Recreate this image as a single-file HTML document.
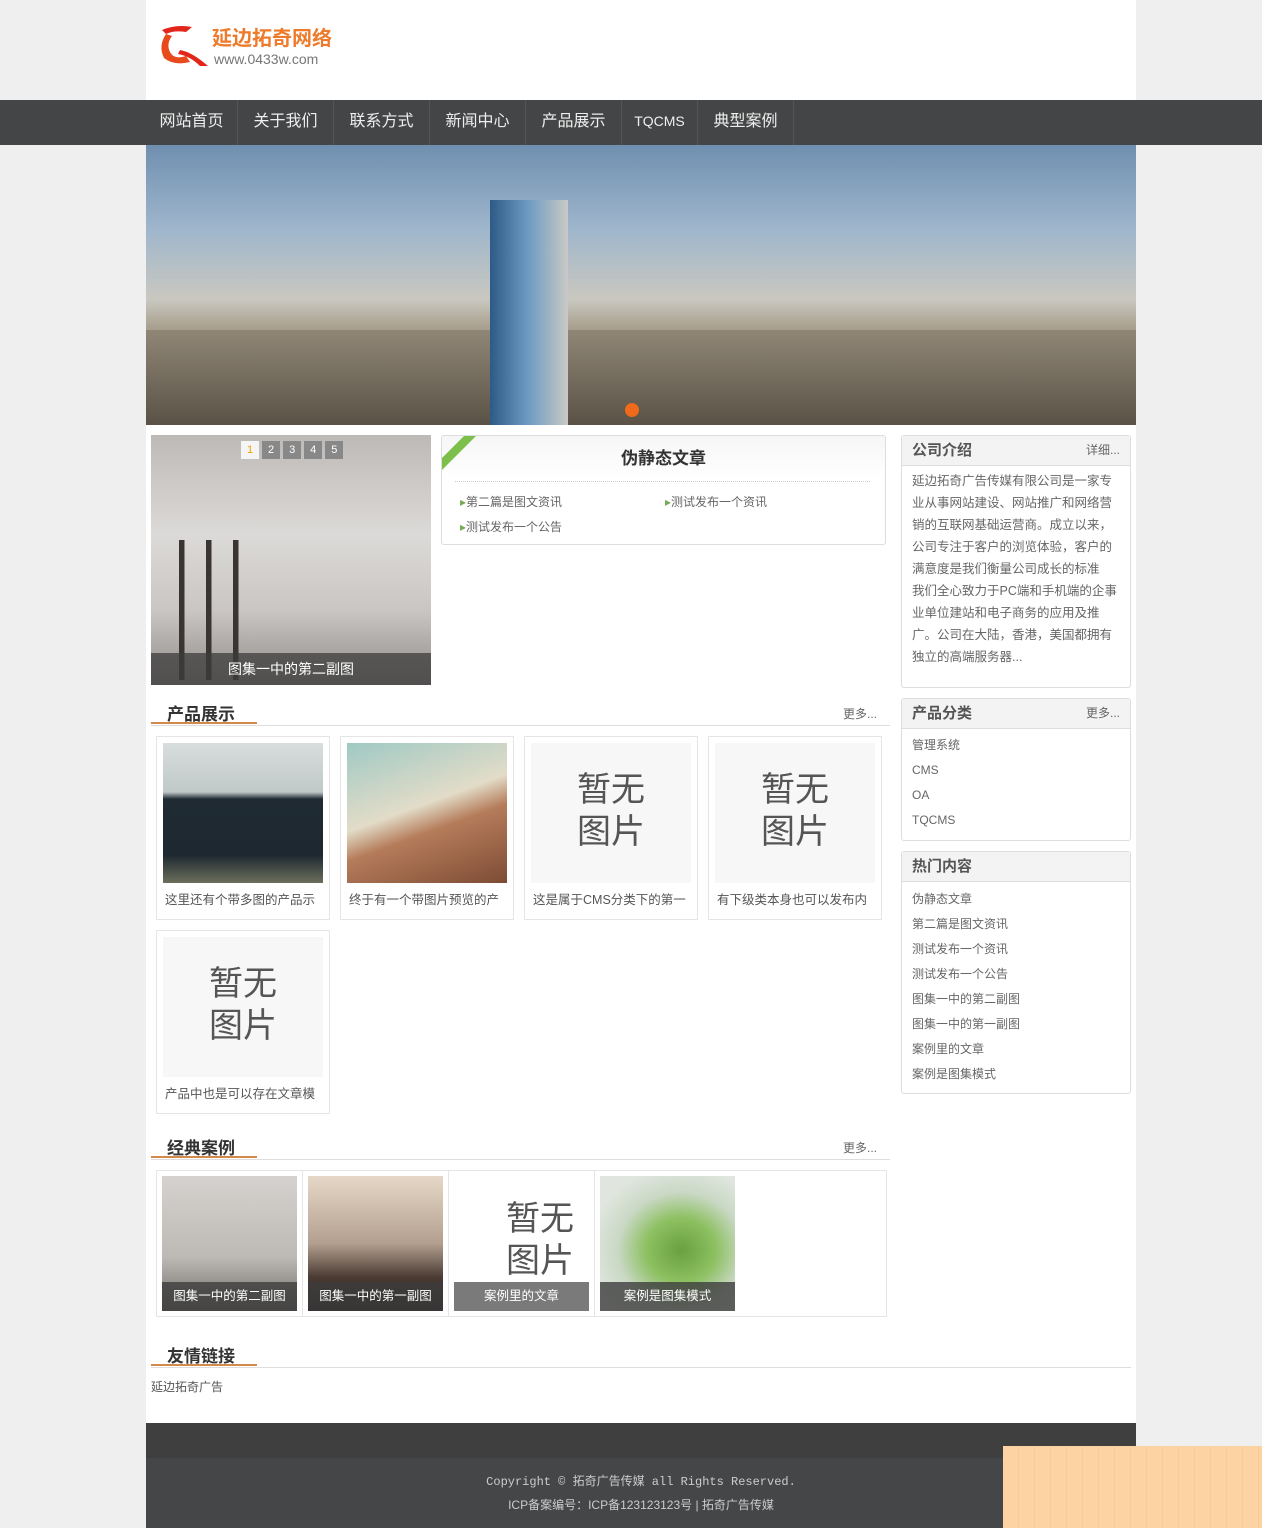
<!DOCTYPE html>
<html><head><meta charset="utf-8"><style>
*{margin:0;padding:0;box-sizing:border-box}
body{width:1262px;height:1528px;background:#efefef;font-family:"Liberation Sans","Noto Sans CJK SC",sans-serif;font-size:12px;color:#555;position:relative;overflow:hidden}
.a{position:absolute}
#wrap{left:146px;top:0;width:990px;height:1528px;background:#fff}
#nav{left:0;top:100px;width:1262px;height:45px;background:#444546}
#nav span{position:absolute;top:0;height:45px;line-height:43px;color:#eee;font-size:16px;text-align:center;border-right:1px solid #555}
.box{border:1px solid #ddd;border-radius:3px;background:#fff}
.bh{height:30px;background:#f3f3f3;border-bottom:1px solid #ddd;line-height:29px;padding:0 10px;font-size:15px;font-weight:bold;color:#555}
.bh i{float:right;font-style:normal;font-weight:normal;font-size:12px;color:#666}
.list div{height:25px;line-height:25px;font-size:12px;color:#666}
.tt{font-size:17px;font-weight:bold;color:#333}
.card{border:1px solid #e5e5e5;width:174px;height:184px}
.card .im{position:absolute;left:6px;top:6px;width:160px;height:140px;background:#f7f7f7;color:#555;font-size:34px;line-height:42px;text-align:center;padding-top:26px}
.card .t{position:absolute;left:8px;top:152px;font-size:12.5px;color:#555;white-space:nowrap;width:158px;overflow:hidden}
.cs{width:135px;height:135px}
.cs .cap{position:absolute;left:0;bottom:0;width:135px;height:29px;background:rgba(60,60,60,.8);color:#fff;text-align:center;line-height:29px;font-size:12.5px}
</style></head><body>
<div id="wrap" class="a"></div>
<svg class="a" style="left:156px;top:22px" width="56" height="46" viewBox="0 0 56 46"><path d="M6 8 Q20 2 36 5 L30 10 Q18 8 10 12 Z" fill="#e2261b"/><path d="M10 12 Q2 24 8 36 Q18 44 34 40 L30 34 Q18 38 14 30 Q10 22 16 14 Z" fill="#e84a1c"/><path d="M24 28 Q36 30 52 44 L44 44 Q34 34 22 32 Z" fill="#e2261b"/></svg>
<div class="a" style="left:212px;top:22px;font-size:20px;font-weight:bold;color:#ee7b2c;letter-spacing:0">延边拓奇网络</div>
<div class="a" style="left:214px;top:51px;font-size:14px;color:#777">www.0433w.com</div>
<div id="nav" class="a">
<span style="left:146px;width:92px">网站首页</span><span style="left:238px;width:96px">关于我们</span><span style="left:334px;width:96px">联系方式</span><span style="left:430px;width:96px">新闻中心</span><span style="left:526px;width:96px">产品展示</span><span style="left:622px;width:76px;font-size:14px">TQCMS</span><span style="left:698px;width:96px">典型案例</span>
</div>
<div class="a" style="left:146px;top:145px;width:990px;height:280px;background:linear-gradient(180deg,#6f8fb0 0%,#9fb6cc 30%,#c9c8c0 55%,#9a8e78 70%,#5c5548 100%)"></div>
<div class="a" style="left:146px;top:330px;width:990px;height:95px;background:linear-gradient(180deg,#8f8676,#5a5246)"></div>
<div class="a" style="left:490px;top:200px;width:78px;height:225px;background:linear-gradient(90deg,#2d5a86,#6f9cc4,#c9c9c4)"></div>
<div class="a" style="left:625px;top:403px;width:14px;height:14px;border-radius:7px;background:#f06a1a"></div>
<div class="a" style="left:151px;top:435px;width:280px;height:250px;background:linear-gradient(180deg,#bdb9b6,#dcdad8 40%,#c9c6c3 70%,#8f8b88)"></div>
<div class="a" style="left:170px;top:540px;width:90px;height:140px;background:linear-gradient(90deg,transparent 10%,#3a3532 10%,#3a3532 16%,transparent 16%,transparent 40%,#3a3532 40%,#3a3532 46%,transparent 46%,transparent 70%,#3a3532 70%,#3a3532 76%,transparent 76%)"></div>
<div class="a" style="left:151px;top:653px;width:280px;height:32px;background:rgba(60,60,60,.75);color:#fff;text-align:center;line-height:32px;font-size:14px">图集一中的第二副图</div>
<div class="a" style="left:241px;top:441px;font-size:11px;color:#fff">
<span style="display:inline-block;width:18px;height:18px;background:#f5f5f5;color:#f0a000;text-align:center;line-height:18px">1</span>
<span style="display:inline-block;width:18px;height:18px;background:#888;text-align:center;line-height:18px">2</span>
<span style="display:inline-block;width:18px;height:18px;background:#888;text-align:center;line-height:18px">3</span>
<span style="display:inline-block;width:18px;height:18px;background:#888;text-align:center;line-height:18px">4</span>
<span style="display:inline-block;width:18px;height:18px;background:#888;text-align:center;line-height:18px">5</span></div>
<div class="a box" style="left:441px;top:435px;width:445px;height:110px;background:linear-gradient(180deg,#f6f6f6,#fff 40%)"></div>
<svg class="a" style="left:442px;top:436px" width="36" height="34"><path d="M0 22 L22 0 L34 0 L0 34 Z" fill="#7cbf4a"/></svg>
<div class="a tt" style="left:441px;top:444px;width:445px;text-align:center">伪静态文章</div>
<div class="a" style="left:455px;top:481px;width:415px;border-top:1px dotted #ccc"></div>
<div class="a list" style="left:460px;top:490px"><div><span style="color:#7a5">▸</span>第二篇是图文资讯</div><div><span style="color:#7a5">▸</span>测试发布一个公告</div></div>
<div class="a list" style="left:665px;top:490px"><div><span style="color:#7a5">▸</span>测试发布一个资讯</div></div>
<div class="a box" style="left:901px;top:435px;width:230px;height:253px"><div class="bh">公司介绍<i>详细...</i></div>
<div style="padding:4px 8px 4px 10px;font-size:12.5px;line-height:22px;color:#666">延边拓奇广告传媒有限公司是一家专业从事网站建设、网站推广和网络营销的互联网基础运营商。成立以来，公司专注于客户的浏览体验，客户的满意度是我们衡量公司成长的标准<br>我们全心致力于PC端和手机端的企事业单位建站和电子商务的应用及推广。公司在大陆，香港，美国都拥有独立的高端服务器...</div></div>
<div class="a box" style="left:901px;top:698px;width:230px;height:143px"><div class="bh">产品分类<i>更多...</i></div>
<div class="list" style="padding:4px 10px"><div>管理系统</div><div>CMS</div><div>OA</div><div>TQCMS</div></div></div>
<div class="a box" style="left:901px;top:851px;width:230px;height:243px"><div class="bh">热门内容</div>
<div class="list" style="padding:5px 10px"><div>伪静态文章</div><div>第二篇是图文资讯</div><div>测试发布一个资讯</div><div>测试发布一个公告</div><div>图集一中的第二副图</div><div>图集一中的第一副图</div><div>案例里的文章</div><div>案例是图集模式</div></div></div>
<div class="a" style="left:151px;top:725px;width:739px;border-top:1px solid #ddd"></div>
<div class="a" style="left:151px;top:722px;width:106px;border-top:2px solid #d2894a"></div>
<div class="a tt" style="left:167px;top:700px">产品展示</div>
<div class="a" style="left:843px;top:705px;color:#666">更多...</div>
<div class="a card" style="left:156px;top:736px"><div class="im" style="background:linear-gradient(180deg,#d8dedd 0%,#c0c8c8 35%,#1f2a33 40%,#1d2830 80%,#6b6f5b 100%)"></div><div class="t">这里还有个带多图的产品示</div></div>
<div class="a card" style="left:340px;top:736px"><div class="im" style="background:linear-gradient(160deg,#9fc9c4,#e2dcc8 45%,#b57c5a 60%,#7d4b35 100%)"></div><div class="t">终于有一个带图片预览的产</div></div>
<div class="a card" style="left:524px;top:736px"><div class="im">暂无<br>图片</div><div class="t">这是属于CMS分类下的第一</div></div>
<div class="a card" style="left:708px;top:736px"><div class="im">暂无<br>图片</div><div class="t">有下级类本身也可以发布内</div></div>
<div class="a card" style="left:156px;top:930px"><div class="im">暂无<br>图片</div><div class="t">产品中也是可以存在文章模</div></div>
<div class="a" style="left:151px;top:1159px;width:739px;border-top:1px solid #ddd"></div>
<div class="a" style="left:151px;top:1156px;width:106px;border-top:2px solid #d2894a"></div>
<div class="a tt" style="left:167px;top:1134px">经典案例</div>
<div class="a" style="left:843px;top:1139px;color:#666">更多...</div>
<div class="a" style="left:156px;top:1170px;width:731px;height:147px;border:1px solid #e5e5e5"></div>
<div class="a" style="left:302px;top:1171px;height:145px;border-left:1px solid #e5e5e5"></div>
<div class="a" style="left:448px;top:1171px;height:145px;border-left:1px solid #e5e5e5"></div>
<div class="a" style="left:594px;top:1171px;height:145px;border-left:1px solid #e5e5e5"></div>
<div class="a cs" style="left:162px;top:1176px;background:linear-gradient(180deg,#d5d2cf,#bdb9b5 60%,#6e6a66)"><div class="cap">图集一中的第二副图</div></div>
<div class="a cs" style="left:308px;top:1176px;background:linear-gradient(180deg,#e6d8c8,#b39f8f 50%,#4a3b33 75%,#2a2220)"><div class="cap">图集一中的第一副图</div></div>
<div class="a cs" style="left:454px;top:1176px;background:#fff"><div style="position:absolute;left:52px;top:22px;font-size:34px;line-height:42px;color:#555">暂无<br>图片</div><div class="cap" style="background:#7a7a7a">案例里的文章</div></div>
<div class="a cs" style="left:600px;top:1176px;background:radial-gradient(ellipse at 60% 55%,#6aa040 0,#8cc060 30%,#c9d8c4 55%,#e0e6df 80%)"><div class="cap">案例是图集模式</div></div>
<div class="a" style="left:151px;top:1367px;width:980px;border-top:1px solid #ddd"></div>
<div class="a" style="left:151px;top:1364px;width:106px;border-top:2px solid #d2894a"></div>
<div class="a tt" style="left:167px;top:1342px">友情链接</div>
<div class="a" style="left:151px;top:1378px;color:#555">延边拓奇广告</div>
<div class="a" style="left:146px;top:1423px;width:990px;height:35px;background:#3f3f3f"></div>
<div class="a" style="left:146px;top:1458px;width:990px;height:70px;background:#454648"></div>
<div class="a" style="left:146px;top:1472px;width:990px;text-align:center;color:#ccc;font-family:'Liberation Mono','Noto Sans CJK SC',monospace;font-size:12px">Copyright © 拓奇广告传媒 all Rights Reserved.</div>
<div class="a" style="left:146px;top:1496px;width:990px;text-align:center;color:#ccc;font-size:12px">ICP备案编号：ICP备123123123号 | 拓奇广告传媒</div>
<div class="a" style="left:1003px;top:1446px;width:259px;height:82px;background:repeating-linear-gradient(90deg,#fdd3a4 0,#fdd3a4 15px,#efc090 16px)"></div>
</body></html>
